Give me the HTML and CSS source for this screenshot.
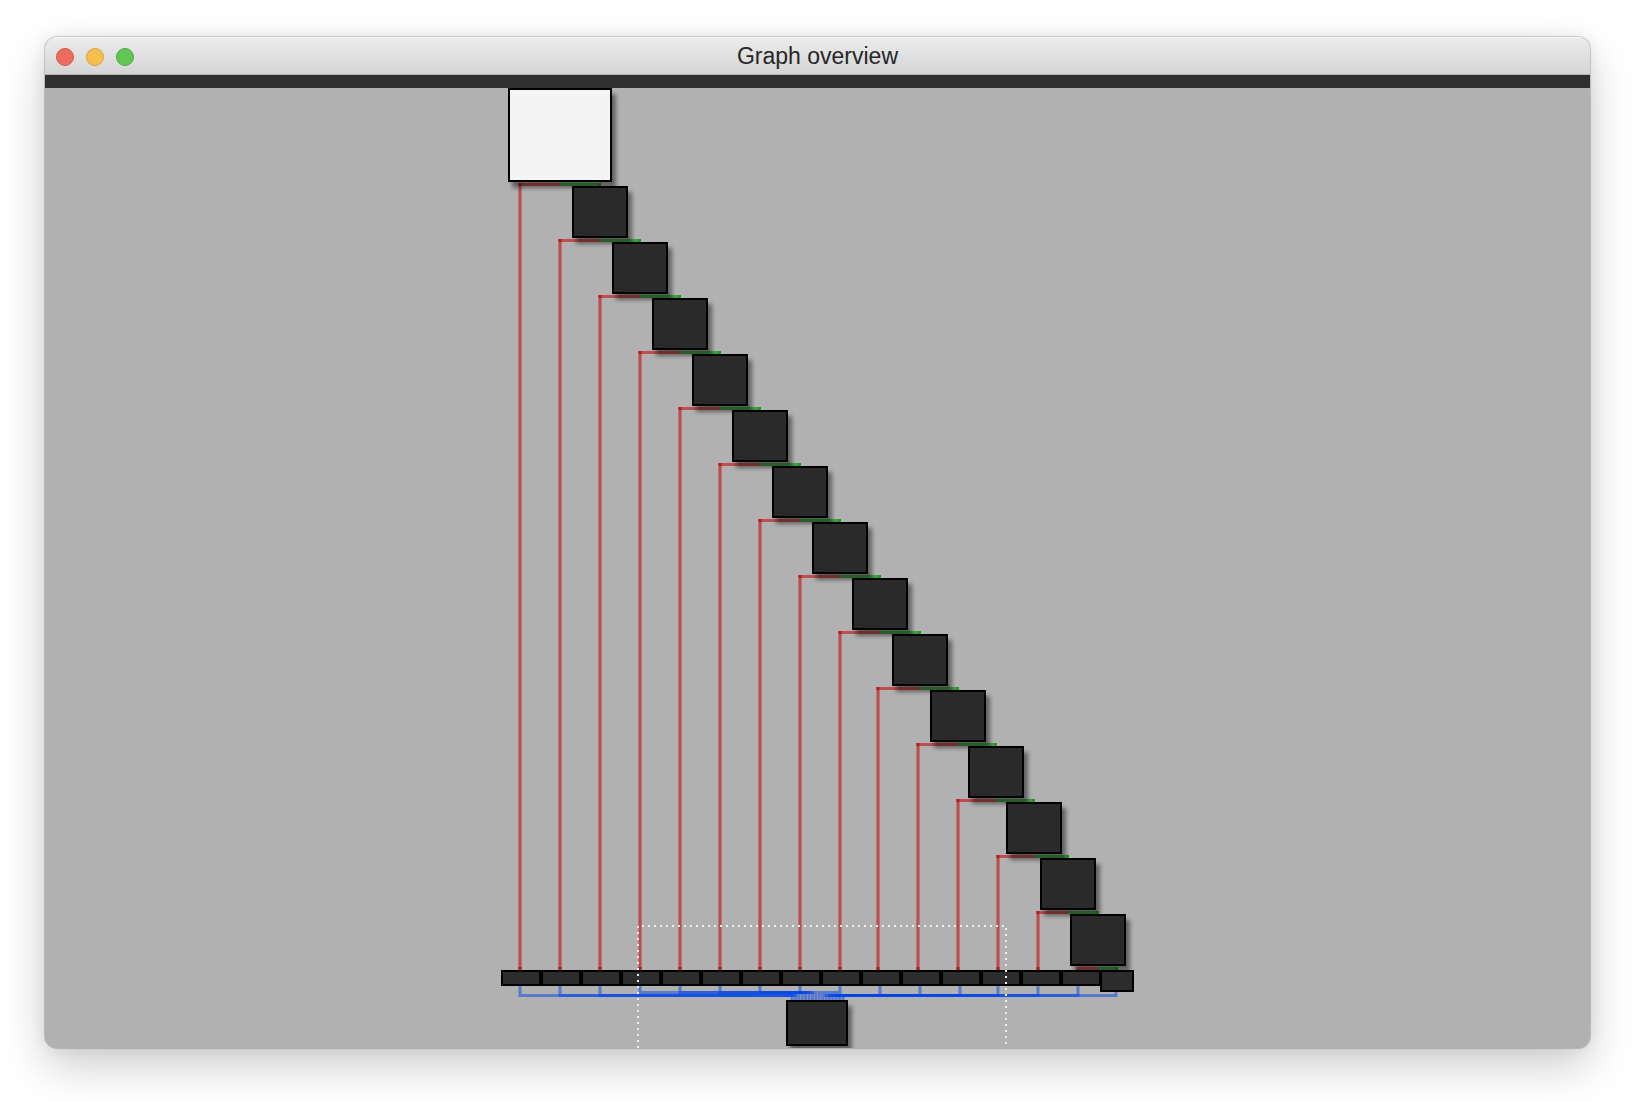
FILE: index.html
```html
<!DOCTYPE html>
<html>
<head>
<meta charset="utf-8">
<title>Graph overview</title>
<link rel="stylesheet" href="styles.css">
</head>
<body>
<div class="window">
  <div class="titlebar">
    <div class="lights">
      <span class="light close"></span>
      <span class="light minimize"></span>
      <span class="light zoom"></span>
    </div>
    <div class="title">Graph overview</div>
    <div class="spacer"></div>
  </div>
  <div class="toolbar"></div>
  <div class="canvas">
    <svg class="graph" viewBox="45 88 1545 960" width="1545" height="960" xmlns="http://www.w3.org/2000/svg">
      <defs>
        <filter id="shadow" x="-20%" y="-20%" width="150%" height="150%">
          <feDropShadow dx="4" dy="6" stdDeviation="2" flood-color="#000" flood-opacity="0.45"/>
        </filter>
      </defs>

      <g class="edges-blue">
        <path d="M520 986 V995.5 H792 V1000"/>
        <path d="M560 986 V995.5 H795.4 V1000"/>
        <path d="M600 986 V995.5 H798.8 V1000"/>
        <path d="M640 986 V992.5 H802.2 V1000"/>
        <path d="M680 986 V992.5 H805.6 V1000"/>
        <path d="M720 986 V992.5 H809 V1000"/>
        <path d="M760 986 V992.5 H812.4 V1000"/>
        <path d="M800 986 V992.5 H815.8 V1000"/>
        <path d="M840 986 V992.5 H819.2 V1000"/>
        <path d="M880 986 V995.5 H822.6 V1000"/>
        <path d="M920 986 V995.5 H826 V1000"/>
        <path d="M960 986 V995.5 H829.4 V1000"/>
        <path d="M998 986 V995.5 H832.8 V1000"/>
        <path d="M1038 986 V995.5 H836.2 V1000"/>
        <path d="M1078 986 V995.5 H839.6 V1000"/>
        <path d="M1116 992 V995.5 H843 V1000"/>
      </g>

      <g class="edges-red">
        <path d="M560 184.5 H520 V970"/>
        <path d="M600 240.5 H560 V970"/>
        <path d="M640 296.5 H600 V970"/>
        <path d="M680 352.5 H640 V970"/>
        <path d="M720 408.5 H680 V970"/>
        <path d="M760 464.5 H720 V970"/>
        <path d="M800 520.5 H760 V970"/>
        <path d="M840 576.5 H800 V970"/>
        <path d="M880 632.5 H840 V970"/>
        <path d="M920 688.5 H878 V970"/>
        <path d="M958 744.5 H918 V970"/>
        <path d="M996 800.5 H958 V970"/>
        <path d="M1034 856.5 H998 V970"/>
        <path d="M1068 912.5 H1038 V970"/>
        <path d="M1098 968.5 H1078 V970"/>
      </g>

      <g class="edges-green">
        <path d="M560 184.5 H600"/>
        <path d="M600 240.5 H640"/>
        <path d="M640 296.5 H680"/>
        <path d="M680 352.5 H720"/>
        <path d="M720 408.5 H760"/>
        <path d="M760 464.5 H800"/>
        <path d="M800 520.5 H840"/>
        <path d="M840 576.5 H880"/>
        <path d="M880 632.5 H920"/>
        <path d="M920 688.5 H958"/>
        <path d="M958 744.5 H996"/>
        <path d="M996 800.5 H1034"/>
        <path d="M1034 856.5 H1068"/>
        <path d="M1068 912.5 H1098"/>
        <path d="M1098 968.5 H1117"/>
      </g>

      <g class="tips-red">
        <rect x="518.5" y="967" width="3" height="3"/>
        <rect x="558.5" y="967" width="3" height="3"/>
        <rect x="598.5" y="967" width="3" height="3"/>
        <rect x="638.5" y="967" width="3" height="3"/>
        <rect x="678.5" y="967" width="3" height="3"/>
        <rect x="718.5" y="967" width="3" height="3"/>
        <rect x="758.5" y="967" width="3" height="3"/>
        <rect x="798.5" y="967" width="3" height="3"/>
        <rect x="838.5" y="967" width="3" height="3"/>
        <rect x="876.5" y="967" width="3" height="3"/>
        <rect x="916.5" y="967" width="3" height="3"/>
        <rect x="956.5" y="967" width="3" height="3"/>
        <rect x="996.5" y="967" width="3" height="3"/>
        <rect x="1036.5" y="967" width="3" height="3"/>
        <rect x="518.5" y="183" width="3" height="3"/>
        <rect x="558.5" y="239" width="3" height="3"/>
        <rect x="598.5" y="295" width="3" height="3"/>
        <rect x="638.5" y="351" width="3" height="3"/>
        <rect x="678.5" y="407" width="3" height="3"/>
        <rect x="718.5" y="463" width="3" height="3"/>
        <rect x="758.5" y="519" width="3" height="3"/>
        <rect x="798.5" y="575" width="3" height="3"/>
        <rect x="838.5" y="631" width="3" height="3"/>
        <rect x="876.5" y="687" width="3" height="3"/>
        <rect x="916.5" y="743" width="3" height="3"/>
        <rect x="956.5" y="799" width="3" height="3"/>
        <rect x="996.5" y="855" width="3" height="3"/>
        <rect x="1036.5" y="911" width="3" height="3"/>
      </g>

      <g class="tips-green">
        <rect x="598" y="183" width="3" height="3"/>
        <rect x="638" y="239" width="3" height="3"/>
        <rect x="678" y="295" width="3" height="3"/>
        <rect x="718" y="351" width="3" height="3"/>
        <rect x="758" y="407" width="3" height="3"/>
        <rect x="798" y="463" width="3" height="3"/>
        <rect x="838" y="519" width="3" height="3"/>
        <rect x="878" y="575" width="3" height="3"/>
        <rect x="918" y="631" width="3" height="3"/>
        <rect x="956" y="687" width="3" height="3"/>
        <rect x="994" y="743" width="3" height="3"/>
        <rect x="1032" y="799" width="3" height="3"/>
        <rect x="1066" y="855" width="3" height="3"/>
        <rect x="1096" y="911" width="3" height="3"/>
        <rect x="1115" y="967" width="3" height="3"/>
      </g>

      <g class="nodes" filter="url(#shadow)">
        <rect class="node start" x="509" y="89" width="102" height="92"/>
        <rect class="node" x="573" y="187" width="54" height="50"/>
        <rect class="node" x="613" y="243" width="54" height="50"/>
        <rect class="node" x="653" y="299" width="54" height="50"/>
        <rect class="node" x="693" y="355" width="54" height="50"/>
        <rect class="node" x="733" y="411" width="54" height="50"/>
        <rect class="node" x="773" y="467" width="54" height="50"/>
        <rect class="node" x="813" y="523" width="54" height="50"/>
        <rect class="node" x="853" y="579" width="54" height="50"/>
        <rect class="node" x="893" y="635" width="54" height="50"/>
        <rect class="node" x="931" y="691" width="54" height="50"/>
        <rect class="node" x="969" y="747" width="54" height="50"/>
        <rect class="node" x="1007" y="803" width="54" height="50"/>
        <rect class="node" x="1041" y="859" width="54" height="50"/>
        <rect class="node" x="1071" y="915" width="54" height="50"/>
        <rect class="node" x="787" y="1001" width="60" height="44"/>
      </g>

      <g class="row">
        <rect class="node" x="502" y="971" width="38" height="14"/>
        <rect class="node" x="542" y="971" width="38" height="14"/>
        <rect class="node" x="582" y="971" width="38" height="14"/>
        <rect class="node" x="622" y="971" width="38" height="14"/>
        <rect class="node" x="662" y="971" width="38" height="14"/>
        <rect class="node" x="702" y="971" width="38" height="14"/>
        <rect class="node" x="742" y="971" width="38" height="14"/>
        <rect class="node" x="782" y="971" width="38" height="14"/>
        <rect class="node" x="822" y="971" width="38" height="14"/>
        <rect class="node" x="862" y="971" width="38" height="14"/>
        <rect class="node" x="902" y="971" width="38" height="14"/>
        <rect class="node" x="942" y="971" width="38" height="14"/>
        <rect class="node" x="982" y="971" width="38" height="14"/>
        <rect class="node" x="1022" y="971" width="38" height="14"/>
        <rect class="node" x="1062" y="971" width="38" height="14"/>
        <rect class="node" x="1101" y="971" width="32" height="20"/>
      </g>

      <path class="viewport" d="M638 1060 V926 H1006 V1060"/>
    </svg>
  </div>
</div>
</body>
</html>
```

FILE: styles.css
```css
html, body {
  margin: 0;
  padding: 0;
}

body {
  width: 1636px;
  height: 1102px;
  overflow: hidden;
  background: #ffffff;
  box-sizing: border-box;
  padding: 37px 0 0 45px;
}

.window {
  width: 1545px;
  height: 1011px;
  border-radius: 12px;
  overflow: hidden;
  display: flex;
  flex-direction: column;
  background: #b1b1b1;
  box-shadow: 0 0 0 1px rgba(0, 0, 0, 0.16), 0 18px 45px rgba(0, 0, 0, 0.2), 0 0 16px rgba(0, 0, 0, 0.08);
}

.titlebar {
  flex: 0 0 auto;
  height: 37px;
  border-bottom: 1px solid #b4b4b4;
  background: linear-gradient(#ececec, #d5d5d5);
  box-shadow: inset 0 1px 0 #f7f7f7;
  display: grid;
  grid-template-columns: 1fr auto 1fr;
  align-items: center;
}

.lights {
  display: flex;
  gap: 12px;
  padding-left: 11px;
  padding-top: 2px;
}

.light {
  width: 18px;
  height: 18px;
  border-radius: 50%;
  box-sizing: border-box;
}

.close {
  background: #ee6b60;
  border: 1px solid #d8564c;
}

.minimize {
  background: #f6be4f;
  border: 1px solid #d9a23e;
}

.zoom {
  background: #62c655;
  border: 1px solid #4fa942;
}

.title {
  font-family: "Liberation Sans", Arial, sans-serif;
  font-size: 23px;
  color: #262626;
  padding-top: 2px;
}

.toolbar {
  flex: 0 0 13px;
  background: #303030;
}

.canvas {
  flex: 1 1 auto;
  background: #b1b1b1;
}

.graph {
  display: block;
}

.edges-blue path {
  fill: none;
  stroke: rgba(0, 68, 232, 0.5);
  stroke-width: 3;
}

.edges-red path {
  fill: none;
  stroke: rgba(200, 0, 0, 0.56);
  stroke-width: 3.2;
}

.edges-green path {
  fill: none;
  stroke: rgba(0, 150, 0, 0.62);
  stroke-width: 3.2;
}

.tips-red rect {
  fill: #b21d1d;
}

.tips-green rect {
  fill: #1f9a1f;
}

.node {
  fill: #2c2c2c;
  stroke: #000000;
  stroke-width: 2;
}

.node.start {
  fill: #f4f4f4;
}

.viewport {
  fill: none;
  stroke: #ededed;
  stroke-width: 2;
  stroke-dasharray: 2 4;
}
```
